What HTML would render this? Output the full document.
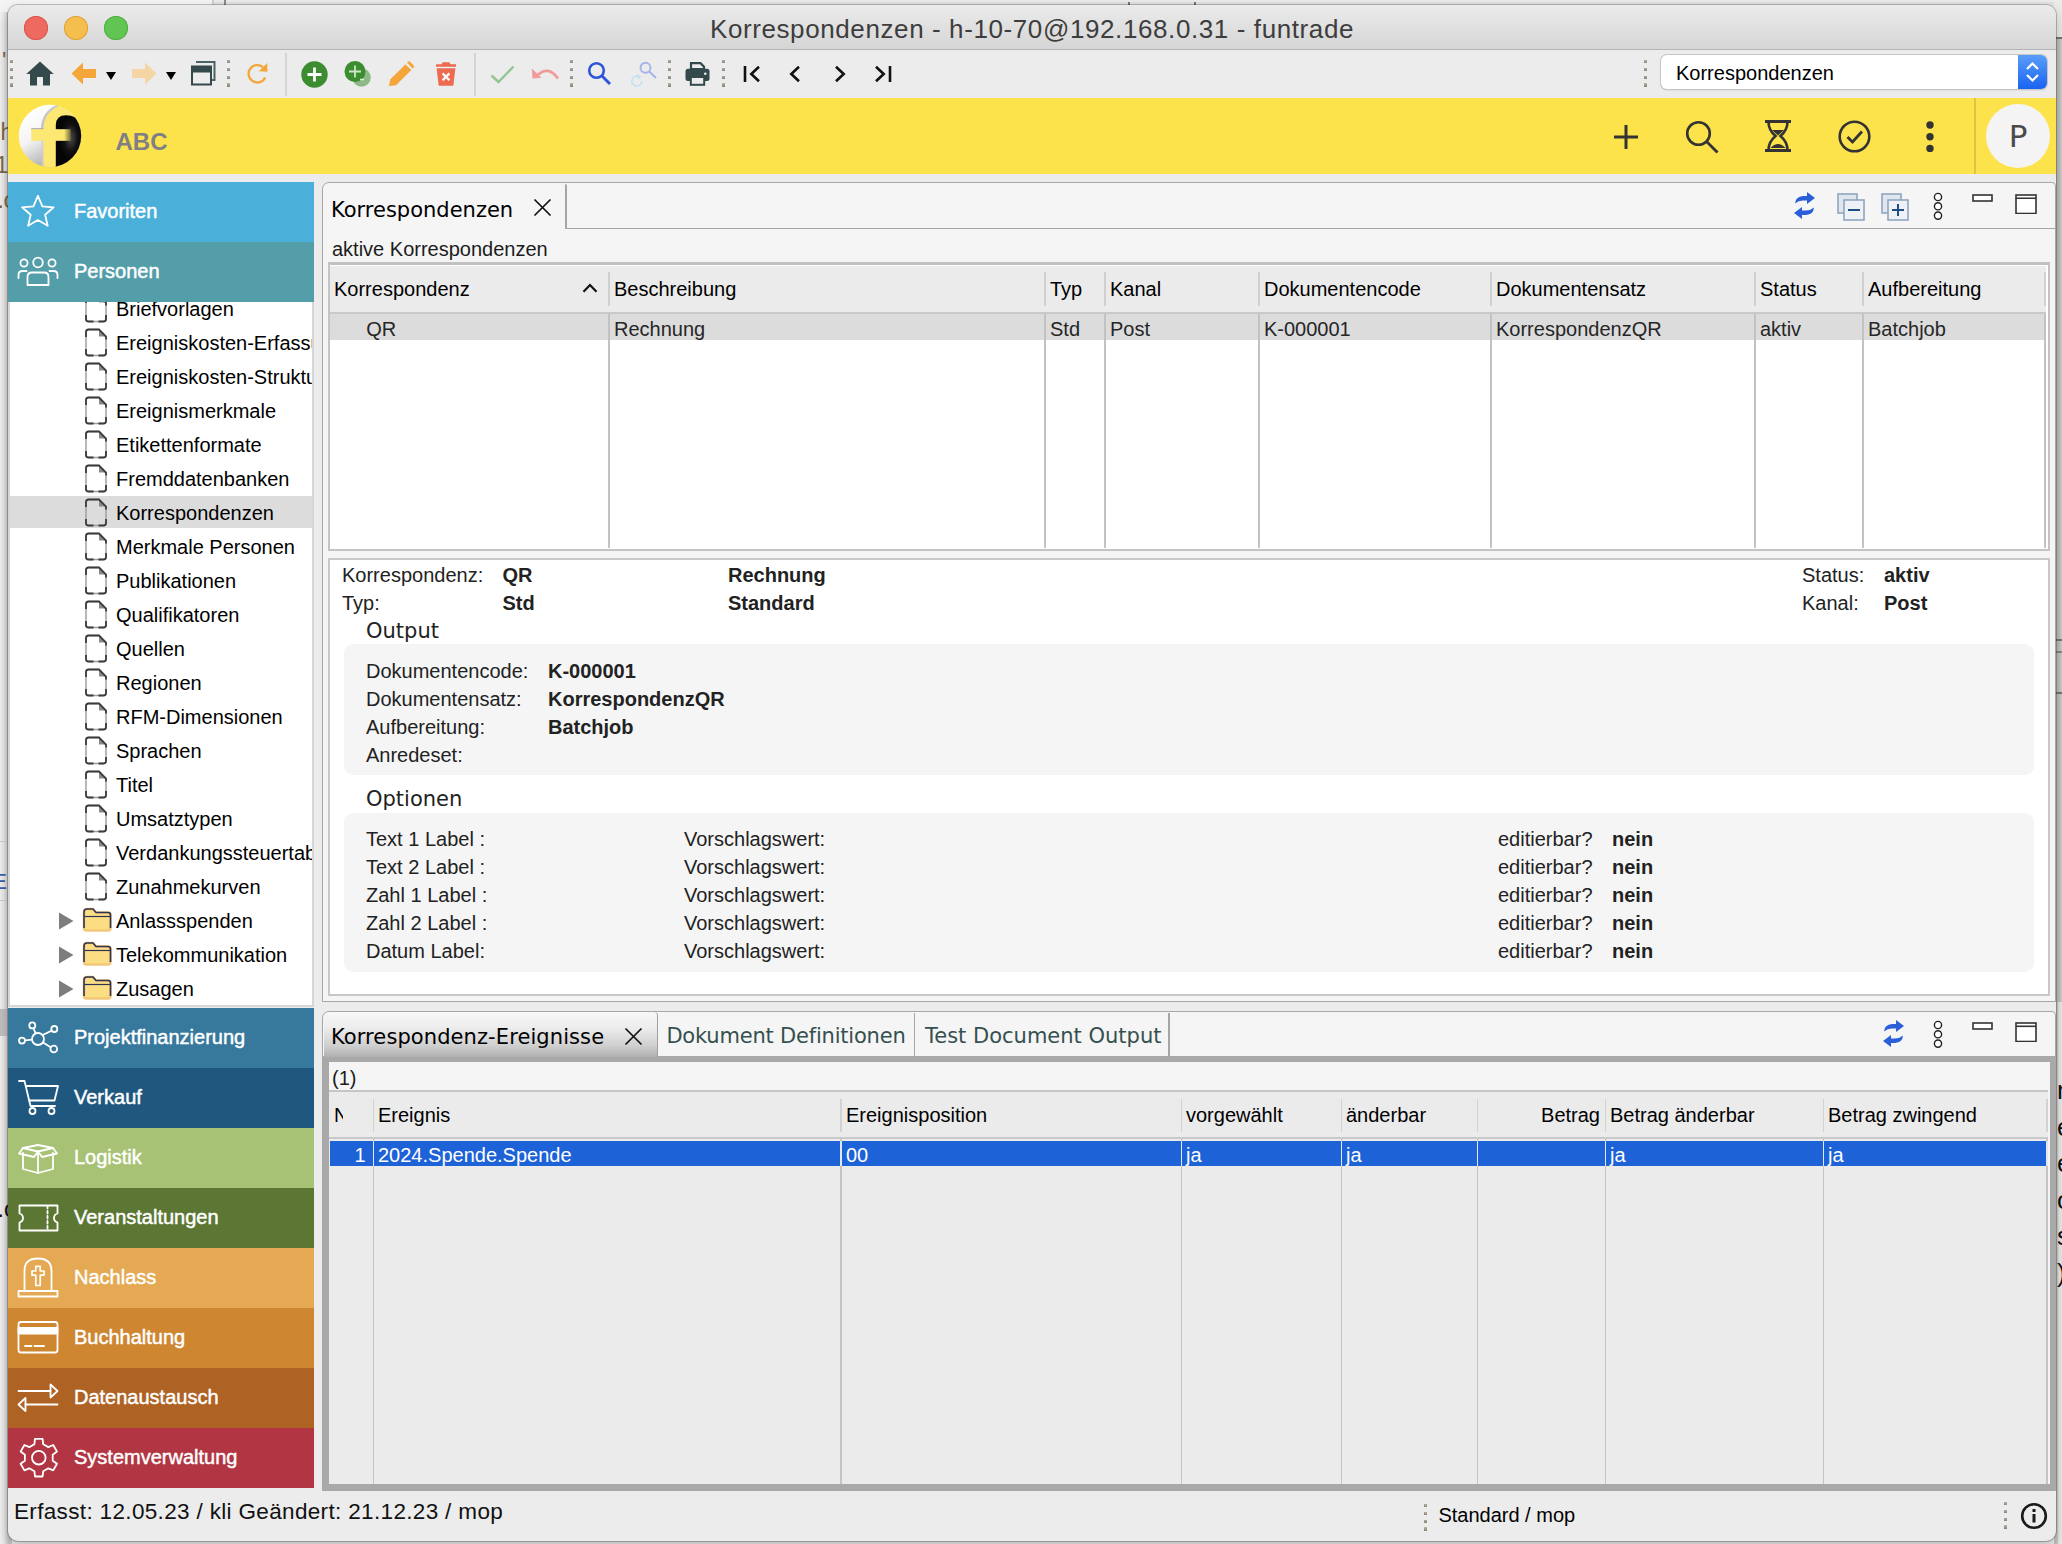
<!DOCTYPE html>
<html lang="de">
<head>
<meta charset="utf-8">
<title>Korrespondenzen - h-10-70@192.168.0.31 - funtrade</title>
<style>
*{box-sizing:border-box;margin:0;padding:0}
html,body{width:2062px;height:1544px;overflow:hidden}
body{background:#f3f3f2;font-family:"Liberation Sans",sans-serif;font-size:20px;color:#000;position:relative}
.abs{position:absolute}
.t{position:absolute;white-space:pre;line-height:24px;height:24px}
.b{font-weight:700}
.dv{font-family:"DejaVu Sans",sans-serif}
#win{position:absolute;left:8px;top:5px;width:2048px;height:1536px;background:#ececec;border-radius:10px;overflow:hidden;box-shadow:0 0 0 1px rgba(0,0,0,.22),0 6px 14px rgba(0,0,0,.25)}
#titlebar{position:absolute;left:0;top:0;width:2048px;height:45px;background:linear-gradient(#ebebeb,#d5d5d5);border-bottom:1px solid #b4b4b4}
#title{position:absolute;left:0;width:2048px;top:9px;text-align:center;font-size:26px;line-height:30px;color:#3d3d3d;letter-spacing:.6px}
.tl{position:absolute;top:11px;width:24px;height:24px;border-radius:50%}
#banner{position:absolute;left:0;top:93px;width:2048px;height:76px;background:#fde34b}
.cat{position:absolute;left:0;width:306px;height:60px;color:#fff}
.cat span{position:absolute;left:66px;top:17px;line-height:24px;font-size:20px;-webkit-text-stroke:.45px #fff}
.cat svg{position:absolute;left:0;top:0}
#tree{position:absolute;left:0;top:297px;width:306px;height:705px;background:#fff;border:2px solid #d6d6d6;border-top:none;overflow:hidden}
.ti{position:absolute;left:0;width:302px;height:34px}
.ti span{position:absolute;left:106px;top:5px;line-height:24px;white-space:pre}
.ti svg{position:absolute}
.grip{position:absolute;width:3.4px;height:28px;background:repeating-linear-gradient(#b4b0a2 0,#8a8676 3.2px,transparent 3.2px,transparent 7.8px)}
.vsep{position:absolute;width:2px;background:#d4d4d4}
.panel{position:absolute;background:#f5f5f5;border:2px solid #a9a9a9;border-radius:9px 9px 0 0}
.th{position:absolute;top:0;height:42px;line-height:42px;white-space:pre}
.hsep{position:absolute;width:2px;background:#cfcfcf}
.col{position:absolute;width:2px;background:#cdcdcd}
.gb{position:absolute;background:#f5f5f5;border-radius:9px}
</style>
</head>
<body>
<div class="abs" style="left:0;top:0;width:213px;height:40px;background:#f4f4f4"></div>
<div class="abs" style="left:213px;top:0;width:1849px;height:6px;background:#e2e2e2;border-top:2px solid #ececec"></div>
<div class="abs" style="left:212px;top:0;width:1.5px;height:6px;background:#cfcfcf"></div>
<div class="abs" style="left:224px;top:0;width:2px;height:6px;background:#8a8a8a"></div>
<div class="abs" style="left:1128px;top:2px;width:1.5px;height:4px;background:#777"></div>
<div class="abs" style="left:1194px;top:2px;width:1.5px;height:4px;background:#777"></div>
<div class="abs" style="left:0;top:12px;width:12px;height:1532px;background:linear-gradient(90deg,#f3f2f1 0,#ecebea 3.5px,#dcdcdc 6px,#c9c9c9 8px)"></div>
<div class="abs" style="left:0;top:1009px;width:9px;height:27px;background:#c2c2c2"></div>
<div class="abs" style="left:0;top:841px;width:9px;height:1px;background:#cfcfcf"></div>
<div class="abs" style="left:0;top:900px;width:9px;height:1px;background:#cfcfcf"></div>
<div class="t" style="left:0.5px;top:119px;font-size:23px;line-height:26px;height:26px;color:#7a6a48">h</div>
<div class="t" style="left:-4.5px;top:151.5px;font-size:23px;line-height:26px;height:26px;color:#7a6a48">1</div>
<div class="t" style="left:-2.5px;top:187px;font-size:23px;line-height:26px;height:26px;color:#7a6a48">.</div>
<div class="t" style="left:3.5px;top:187px;font-size:23px;line-height:26px;height:26px;color:#7a6a48">c</div>
<div class="t" style="left:2px;top:48px;font-size:23px;line-height:26px;height:26px;color:#7a6a48">'</div>
<div class="t" style="left:-2.5px;top:1196px;font-size:23px;line-height:26px;height:26px;color:#111">.</div>
<div class="t" style="left:4px;top:1196px;font-size:23px;line-height:26px;height:26px;color:#111">c</div>
<div class="t" style="left:-20px;top:870px;width:27px;text-align:right;font-size:22px;line-height:24px;color:#3b5ea8">E</div>
<div class="abs" style="left:2054px;top:0;width:8px;height:38px;background:#ececec"></div>
<div class="abs" style="left:2054px;top:37px;width:8px;height:965px;background:linear-gradient(90deg,#bdbdbd 0,#bdbdbd 4px,#d2d2d2 8px)"></div>
<div class="abs" style="left:2054px;top:37px;width:8px;height:1.5px;background:#777"></div>
<div class="abs" style="left:2054px;top:639px;width:8px;height:1.5px;background:#777"></div>
<div class="abs" style="left:2054px;top:651px;width:8px;height:1.5px;background:#888"></div>
<div class="abs" style="left:2054px;top:692px;width:8px;height:1.5px;background:#777"></div>
<div class="abs" style="left:2054px;top:1002px;width:8px;height:542px;background:linear-gradient(90deg,#c4c4c4 0,#c4c4c4 3px,#ececec 5px)"></div>
<div class="t" style="left:2057px;top:1072px;font-size:26px;line-height:36.5px;height:230px;color:#111;white-space:pre-line;width:20px">n
e
e
o
s
)</div>
<div id="win">
<div id="titlebar">
<div class="tl" style="left:16px;background:#ee6a5e;box-shadow:inset 0 0 0 1px #d9574c"></div>
<div class="tl" style="left:56px;background:#f6be4f;box-shadow:inset 0 0 0 1px #dea33a"></div>
<div class="tl" style="left:96px;background:#61c554;box-shadow:inset 0 0 0 1px #4fae42"></div>
<div id="title">Korrespondenzen - h-10-70@192.168.0.31 - funtrade</div>
</div>
<div class="grip" style="left:2px;top:55px"></div>
<svg class="abs" style="left:18px;top:56px" width="28" height="25" viewBox="0 0 28 25"><path d="M14 0.5 L0.3 13 H4 V24.5 H11 V16 H17 V24.5 H24 V13 H27.7 Z" fill="#34494b"/></svg>
<svg class="abs" style="left:63px;top:57px" width="26" height="24" viewBox="0 0 26 24"><path d="M12 0.5 L0.5 11.5 L12 22.5 V16 H25 V7 H12 Z" fill="#f4a63b"/></svg>
<svg class="abs" style="left:98px;top:67px" width="10" height="8" viewBox="0 0 10 8"><path d="M0 0 H10 L5 8 Z" fill="#000"/></svg>
<svg class="abs" style="left:123px;top:57px" width="26" height="24" viewBox="0 0 26 24"><path d="M14 0.5 L25.5 11.5 L14 22.5 V16 H1 V7 H14 Z" fill="#f5d5a6"/></svg>
<svg class="abs" style="left:158px;top:67px" width="10" height="8" viewBox="0 0 10 8"><path d="M0 0 H10 L5 8 Z" fill="#000"/></svg>
<svg class="abs" style="left:183px;top:56px" width="25" height="25" viewBox="0 0 25 25"><path d="M5 1 H23.5 V19 H20" fill="none" stroke="#4d6366" stroke-width="2"/><rect x="1" y="5.5" width="19" height="18" fill="#ececec" stroke="#34494b" stroke-width="2"/><rect x="1" y="5.5" width="19" height="6" fill="#34494b"/></svg>
<div class="grip" style="left:219px;top:55px"></div>
<svg class="abs" style="left:238px;top:57px" width="24" height="24" viewBox="0 0 24 24"><path d="M19.2 15.5 A8.7 8.7 0 1 1 17 5.2" fill="none" stroke="#f4a63b" stroke-width="2.3"/><path d="M12.8 9.3 L21.5 9.8 L21.2 1 Z" fill="#f4a63b"/></svg>
<div class="vsep" style="left:277px;top:48px;height:43px"></div>
<svg class="abs" style="left:292.6px;top:55.5px" width="27" height="27" viewBox="0 0 27 27"><circle cx="13.5" cy="13.5" r="13.2" fill="#3c8c30"/><path d="M13.5 6.5 V20.5 M6.5 13.5 H20.5" stroke="#fff" stroke-width="2.8"/></svg>
<svg class="abs" style="left:335px;top:55px" width="30" height="28" viewBox="0 0 30 28"><circle cx="18.5" cy="17.5" r="9.3" fill="#8fb888"/><circle cx="12" cy="11.5" r="10.5" fill="#3c8c30"/><path d="M12 5.5 V17.5 M6 11.5 H18" stroke="#cfe6c9" stroke-width="1.8"/><path d="M17 19.5 h4" stroke="#dfeedc" stroke-width="1.3"/></svg>
<svg class="abs" style="left:380px;top:56px" width="27" height="26" viewBox="0 0 27 26"><path d="M1 25 L2.2 18.5 L17.5 3.2 L23.3 9 L8 24.2 Z" fill="#f4a63b"/><path d="M19 1.8 L20.3 0.5 Q21 0 21.8 0.6 L26 4.8 Q26.5 5.6 25.9 6.3 L24.7 7.6 Z" fill="#f4a63b"/></svg>
<svg class="abs" style="left:427px;top:56px" width="22" height="26" viewBox="0 0 22 26"><path d="M1 3.3 H6.5 L7.8 1.3 H14.2 L15.5 3.3 H21 V5.8 H1 Z" fill="#ee6a50"/><path d="M1.6 7.3 H20.4 L18.3 24.8 H3.7 Z" fill="#ee6a50"/><path d="M7.6 12.4 L14.4 19.2 M14.4 12.4 L7.6 19.2" stroke="#fff" stroke-width="2.3"/></svg>
<div class="vsep" style="left:466px;top:48px;height:43px"></div>
<svg class="abs" style="left:482px;top:60px" width="25" height="19" viewBox="0 0 25 19"><path d="M1.5 10.5 L8.5 17 L23.5 1.5" fill="none" stroke="#93c493" stroke-width="2.4"/></svg>
<svg class="abs" style="left:523px;top:62px" width="29" height="14" viewBox="0 0 29 14"><path d="M6.5 8.2 Q17 -2 27 11.5" fill="none" stroke="#f09a9a" stroke-width="2.8"/><path d="M0.8 1.5 L10.5 10.8 L1.5 11.5 Z" fill="#f09a9a"/></svg>
<div class="grip" style="left:562px;top:55px"></div>
<svg class="abs" style="left:579px;top:56px" width="25" height="25" viewBox="0 0 25 25"><circle cx="9.5" cy="9.5" r="7.3" fill="none" stroke="#2c55d8" stroke-width="2.6"/><path d="M14.8 14.8 L23 23" stroke="#2c55d8" stroke-width="3"/></svg>
<svg class="abs" style="left:622px;top:56px" width="28" height="27" viewBox="0 0 28 27"><circle cx="15.5" cy="6.8" r="5" fill="none" stroke="#a5b4ea" stroke-width="1.9"/><path d="M19.2 10.6 L26 17" stroke="#a5b4ea" stroke-width="2.1"/><path d="M11.8 20 A5 5 0 1 1 8 15.3" fill="none" stroke="#c3e0f0" stroke-width="1.5"/><path d="M7 13 L11.5 15.8 L8 18.5 Z" fill="#c3e0f0"/></svg>
<div class="grip" style="left:660px;top:55px"></div>
<svg class="abs" style="left:677px;top:57px" width="25" height="24" viewBox="0 0 25 24"><path d="M6 7 V1.2 H15.5 L19 4.7 V7 Z" fill="#ececec" stroke="#34494b" stroke-width="2.2"/><rect x="0.5" y="6.8" width="24" height="12.2" rx="2.5" fill="#34494b"/><rect x="5.8" y="15" width="13.4" height="7.8" fill="#ececec" stroke="#34494b" stroke-width="2"/><circle cx="20.3" cy="11.7" r="1.3" fill="#ececec"/></svg>
<div class="grip" style="left:714px;top:55px"></div>
<svg class="abs" style="left:735px;top:60px" width="18" height="18" viewBox="0 0 18 18"><path d="M2 1 V17" stroke="#111" stroke-width="2.6"/><path d="M16 1.8 L8.3 9 L16 16.2" fill="none" stroke="#111" stroke-width="2.6"/></svg>
<svg class="abs" style="left:781px;top:60px" width="12" height="18" viewBox="0 0 12 18"><path d="M10 1.8 L2.3 9 L10 16.2" fill="none" stroke="#111" stroke-width="2.6"/></svg>
<svg class="abs" style="left:826px;top:60px" width="12" height="18" viewBox="0 0 12 18"><path d="M2 1.8 L9.7 9 L2 16.2" fill="none" stroke="#111" stroke-width="2.6"/></svg>
<svg class="abs" style="left:866px;top:60px" width="18" height="18" viewBox="0 0 18 18"><path d="M16 1 V17" stroke="#111" stroke-width="2.6"/><path d="M2 1.8 L9.7 9 L2 16.2" fill="none" stroke="#111" stroke-width="2.6"/></svg>
<div class="grip" style="left:1636px;top:55px"></div>
<div class="abs" style="left:1653px;top:50px;width:386px;height:34px;background:#fff;border-radius:6px;box-shadow:0 0 0 1px #c6c6c6,0 1px 1.5px rgba(0,0,0,.25);overflow:hidden">
<div class="t" style="left:15px;top:6px">Korrespondenzen</div>
<div class="abs" style="right:0;top:0;width:29px;height:34px;background:linear-gradient(#5a9df8,#1a63f2)"><svg class="abs" style="left:7px;top:6px" width="15" height="22" viewBox="0 0 15 22"><path d="M2 8 L7.5 2.5 L13 8 M2 14 L7.5 19.5 L13 14" fill="none" stroke="#fff" stroke-width="2.2"/></svg></div>
</div>
<div id="banner">
<svg class="abs" style="left:11px;top:5px" width="64" height="66" viewBox="0 0 64 66"><defs><linearGradient id="lg1" x1="0.1" y1="0.15" x2="0.55" y2="0.95"><stop offset="0" stop-color="#fff"/><stop offset="0.45" stop-color="#f4f4f4"/><stop offset="1" stop-color="#a8a8a8"/></linearGradient><radialGradient id="lg2" cx="0.55" cy="0.42" r="0.42"><stop offset="0" stop-color="#4a4a4a"/><stop offset="0.6" stop-color="#111"/><stop offset="1" stop-color="#050505"/></radialGradient><linearGradient id="lg3" x1="0" y1="0" x2="1" y2="0"><stop offset="0" stop-color="#fde873"/><stop offset="0.55" stop-color="#fde873"/><stop offset="1" stop-color="#6d6638"/></linearGradient><clipPath id="lc"><circle cx="31" cy="33" r="31.2"/></clipPath></defs><circle cx="31" cy="33" r="31.2" fill="url(#lg1)"/><g clip-path="url(#lc)"><path d="M24.3 66 V27 Q24.5 9 41 2.5 L64 -2 V66 Z" fill="#fde873"/><path d="M24.3 27 Q24.5 9 41 2.5 L39 1.6 Q22 8 21.8 27 Z" fill="#9a9a9a" opacity=".55"/><path d="M36.8 66 V22 Q37 12.2 47 12.2 Q58 12.2 64 22 V66 Z" fill="url(#lg2)"/><rect x="12.3" y="25.2" width="12" height="1.6" fill="#a5a5a5"/><rect x="12.3" y="26.2" width="25" height="11.6" fill="#fde873"/><rect x="36.8" y="26.2" width="15" height="11.6" fill="url(#lg3)"/><rect x="22.3" y="37.8" width="2" height="28" fill="#cfcfcf" opacity=".7"/></g></svg>
<div class="t b" style="left:107.5px;top:28.5px;font-size:24px;line-height:30px;height:30px;color:#817f86">ABC</div>
<svg class="abs" style="left:1604px;top:25px" width="28" height="28" viewBox="0 0 28 28"><path d="M14 2 V26 M2 14 H26" stroke="#333" stroke-width="3"/></svg>
<svg class="abs" style="left:1676px;top:21px" width="36" height="36" viewBox="0 0 36 36"><circle cx="14.5" cy="14.5" r="11.3" fill="none" stroke="#333" stroke-width="2.6"/><path d="M22.8 22.8 L33.5 33.5" stroke="#333" stroke-width="2.8"/></svg>
<svg class="abs" style="left:1756px;top:21px" width="28" height="34" viewBox="0 0 28 34"><path d="M1 2.5 H27 M1 31.5 H27" stroke="#333" stroke-width="3"/><path d="M4.5 3 Q4.5 11 11.5 17 Q4.5 23 4.5 31 M23.5 3 Q23.5 11 16.5 17 Q23.5 23 23.5 31" fill="none" stroke="#333" stroke-width="2.6"/><path d="M8 11 H20 L14 16.5 Z M6.5 29 Q14 21 21.5 29 Z" fill="#333"/></svg>
<svg class="abs" style="left:1829px;top:21px" width="36" height="36" viewBox="0 0 36 36"><circle cx="17.5" cy="17.5" r="14.8" fill="none" stroke="#333" stroke-width="2.6"/><path d="M10.5 18 L15.5 23 L25 12.5" fill="none" stroke="#333" stroke-width="2.8"/></svg>
<svg class="abs" style="left:1917px;top:22px" width="10" height="34" viewBox="0 0 10 34"><circle cx="5" cy="5" r="3.7" fill="#333"/><circle cx="5" cy="16.7" r="3.7" fill="#333"/><circle cx="5" cy="28.4" r="3.7" fill="#333"/></svg>
<div class="abs" style="left:1966px;top:0;width:2px;height:76px;background:#dcc53f"></div>
<div class="abs" style="left:1978px;top:6px;width:64px;height:64px;border-radius:50%;background:#f4f4f5"></div>
<div class="t dv" style="left:1978px;top:18px;width:64px;text-align:center;font-size:31px;line-height:40px;height:40px;color:#4a4a4a">P</div>
</div>
<!--SB0-->
<div class="cat" style="top:177px;background:#4ab0d9"><svg width="66" height="60" viewBox="0 0 66 60"><path d="M29.9,13.8 L34.4,24.3 L45.7,25.3 L37.1,32.7 L39.7,43.8 L29.9,38.0 L20.1,43.8 L22.7,32.7 L14.1,25.3 L25.4,24.3 Z" stroke="#fff" fill="none" stroke-width="1.8" stroke-linejoin="round" stroke-linecap="round"/></svg><span>Favoriten</span></div>
<div class="cat" style="top:237px;background:#549eaa"><svg width="66" height="60" viewBox="0 0 66 60"><g stroke="#fff" fill="none" stroke-width="1.8" stroke-linejoin="round" stroke-linecap="round"><circle cx="30" cy="20.5" r="4.8"/><circle cx="16" cy="21" r="3.6"/><circle cx="44" cy="21" r="3.6"/><path d="M19.5 43 V35 Q19.5 30.5 24 30.5 H36 Q40.5 30.5 40.5 35 V43 Z"/><path d="M10.5 36 V33 Q10.5 29 14.5 29 H18.5 M49.5 36 V33 Q49.5 29 45.5 29 H41.5"/></g></svg><span>Personen</span></div>
<div class="cat" style="top:1003px;background:#37789d"><svg width="66" height="60" viewBox="0 0 66 60"><g stroke="#fff" fill="none" stroke-width="1.8" stroke-linejoin="round" stroke-linecap="round"><circle cx="30" cy="31" r="6"/><circle cx="24.3" cy="17.4" r="3"/><circle cx="46.3" cy="21" r="3"/><circle cx="14" cy="32.6" r="3"/><circle cx="45.8" cy="41" r="3.4"/><path d="M27.6 25.4 L25.5 20.3 M34.6 27 L43.8 22.6 M24 31.7 L17 32.3 M35 34.5 L42.7 39.3"/></g></svg><span>Projektfinanzierung</span></div>
<div class="cat" style="top:1063px;background:#20577f"><svg width="66" height="60" viewBox="0 0 66 60"><g stroke="#fff" fill="none" stroke-width="1.8" stroke-linejoin="round" stroke-linecap="round"><path d="M11 13 H16.5 L22.5 38 H47"/><path d="M18 18 H50 L46.5 32.5 H21.3"/><circle cx="24.5" cy="43" r="3"/><circle cx="43.5" cy="43" r="3"/></g></svg><span>Verkauf</span></div>
<div class="cat" style="top:1123px;background:#a8c275"><svg width="66" height="60" viewBox="0 0 66 60"><g stroke="#fff" fill="none" stroke-width="1.8" stroke-linejoin="round" stroke-linecap="round"><path d="M15 25 V41 L30 45 L45 41 V25"/><path d="M15 20 L30 17 L45 20 L30 23.5 Z"/><path d="M15 20 L11 25.5 L26 29 L30 23.5 L34 29 L49 25.5 L45 20"/><path d="M30 23.5 V45"/></g></svg><span>Logistik</span></div>
<div class="cat" style="top:1183px;background:#5c7733"><svg width="66" height="60" viewBox="0 0 66 60"><g stroke="#fff" fill="none" stroke-width="1.8" stroke-linejoin="round" stroke-linecap="round"><path d="M11.5 17.5 H49.5 V25.5 Q46 26.5 46 30 Q46 33.5 49.5 34.5 V42.5 H11.5 V34.5 Q15 33.5 15 30 Q15 26.5 11.5 25.5 Z"/><path d="M39.5 18 V42" stroke-dasharray="2.5 2.5"/></g></svg><span>Veranstaltungen</span></div>
<div class="cat" style="top:1243px;background:#e4a952"><svg width="66" height="60" viewBox="0 0 66 60"><g stroke="#fff" fill="none" stroke-width="1.8" stroke-linejoin="round" stroke-linecap="round"><path d="M16.5 43 V23 Q16.5 10.5 30 10.5 Q43.5 10.5 43.5 23 V43"/><path d="M10.5 43 H49.5 V48.5 H10.5 Z"/><path d="M27.8 18.3 H32.2 V23 H36 V27.2 H32.2 V37.5 H27.8 V27.2 H24 V23 H27.8 Z" stroke-width="1.7"/></g></svg><span>Nachlass</span></div>
<div class="cat" style="top:1303px;background:#ce8631"><svg width="66" height="60" viewBox="0 0 66 60"><g stroke="#fff" fill="none" stroke-width="1.8" stroke-linejoin="round" stroke-linecap="round"><rect x="10.5" y="14" width="39" height="30.5" rx="2.5"/><path d="M10.5 20 H49.5 V25.5 H10.5 Z" fill="#fff"/><path d="M17 38 H23.5 M26.5 38 H36"/></g></svg><span>Buchhaltung</span></div>
<div class="cat" style="top:1363px;background:#ae6223"><svg width="66" height="60" viewBox="0 0 66 60"><g stroke="#fff" fill="none" stroke-width="1.8" stroke-linejoin="round" stroke-linecap="round"><path d="M10.5 23 H42.5 M17.5 36.5 H49.5"/><path d="M42.5 16.5 L49.5 23 L42.5 29.5 Z"/><path d="M17.5 30 L10.5 36.5 L17.5 43 Z"/></g></svg><span>Datenaustausch</span></div>
<div class="cat" style="top:1423px;background:#b23543"><svg width="66" height="60" viewBox="0 0 66 60"><g stroke="#fff" fill="none" stroke-width="1.8" stroke-linejoin="round" stroke-linecap="round"><path d="M26.4,16.2 L27.0,10.9 L34.6,10.9 L35.2,16.2 L40.3,19.1 L45.2,17.0 L49.0,23.6 L44.7,26.7 L44.7,32.7 L49.0,35.8 L45.2,42.4 L40.3,40.3 L35.2,43.2 L34.6,48.5 L27.0,48.5 L26.4,43.2 L21.3,40.3 L16.4,42.4 L12.6,35.8 L16.9,32.7 L16.9,26.7 L12.6,23.6 L16.4,17.0 L21.3,19.1 Z" stroke-linejoin="round"/><circle cx="30.8" cy="29.7" r="6.8"/></g></svg><span>Systemverwaltung</span></div>
<div id="tree">
<div class="ti" style="top:-10px"><svg style="left:74px;top:1.5px" width="24" height="29" viewBox="0 0 24 29"><path d="M4.5 1.5 H15 L22 8.5 V25 Q22 27.5 19.5 27.5 H4.5 Q2 27.5 2 25 V4 Q2 1.5 4.5 1.5 Z" fill="none" stroke="#9b9b9b" stroke-width="1.4"/><path d="M15 1.5 V8.5 H22 Z" fill="#8a8a8a"/><path d="M2 9 V4 Q2 1.5 4.5 1.5 H15 L22 8.5 V11.5 M2 21 V25 Q2 27.5 4.5 27.5 H9.5 M14.5 27.5 H19.5 Q22 27.5 22 25 V21" fill="none" stroke="#3c3c3c" stroke-width="1.8"/></svg><span>Briefvorlagen</span></div>
<div class="ti" style="top:24px"><svg style="left:74px;top:1.5px" width="24" height="29" viewBox="0 0 24 29"><path d="M4.5 1.5 H15 L22 8.5 V25 Q22 27.5 19.5 27.5 H4.5 Q2 27.5 2 25 V4 Q2 1.5 4.5 1.5 Z" fill="none" stroke="#9b9b9b" stroke-width="1.4"/><path d="M15 1.5 V8.5 H22 Z" fill="#8a8a8a"/><path d="M2 9 V4 Q2 1.5 4.5 1.5 H15 L22 8.5 V11.5 M2 21 V25 Q2 27.5 4.5 27.5 H9.5 M14.5 27.5 H19.5 Q22 27.5 22 25 V21" fill="none" stroke="#3c3c3c" stroke-width="1.8"/></svg><span>Ereigniskosten-Erfassung</span></div>
<div class="ti" style="top:58px"><svg style="left:74px;top:1.5px" width="24" height="29" viewBox="0 0 24 29"><path d="M4.5 1.5 H15 L22 8.5 V25 Q22 27.5 19.5 27.5 H4.5 Q2 27.5 2 25 V4 Q2 1.5 4.5 1.5 Z" fill="none" stroke="#9b9b9b" stroke-width="1.4"/><path d="M15 1.5 V8.5 H22 Z" fill="#8a8a8a"/><path d="M2 9 V4 Q2 1.5 4.5 1.5 H15 L22 8.5 V11.5 M2 21 V25 Q2 27.5 4.5 27.5 H9.5 M14.5 27.5 H19.5 Q22 27.5 22 25 V21" fill="none" stroke="#3c3c3c" stroke-width="1.8"/></svg><span>Ereigniskosten-Struktur</span></div>
<div class="ti" style="top:92px"><svg style="left:74px;top:1.5px" width="24" height="29" viewBox="0 0 24 29"><path d="M4.5 1.5 H15 L22 8.5 V25 Q22 27.5 19.5 27.5 H4.5 Q2 27.5 2 25 V4 Q2 1.5 4.5 1.5 Z" fill="none" stroke="#9b9b9b" stroke-width="1.4"/><path d="M15 1.5 V8.5 H22 Z" fill="#8a8a8a"/><path d="M2 9 V4 Q2 1.5 4.5 1.5 H15 L22 8.5 V11.5 M2 21 V25 Q2 27.5 4.5 27.5 H9.5 M14.5 27.5 H19.5 Q22 27.5 22 25 V21" fill="none" stroke="#3c3c3c" stroke-width="1.8"/></svg><span>Ereignismerkmale</span></div>
<div class="ti" style="top:126px"><svg style="left:74px;top:1.5px" width="24" height="29" viewBox="0 0 24 29"><path d="M4.5 1.5 H15 L22 8.5 V25 Q22 27.5 19.5 27.5 H4.5 Q2 27.5 2 25 V4 Q2 1.5 4.5 1.5 Z" fill="none" stroke="#9b9b9b" stroke-width="1.4"/><path d="M15 1.5 V8.5 H22 Z" fill="#8a8a8a"/><path d="M2 9 V4 Q2 1.5 4.5 1.5 H15 L22 8.5 V11.5 M2 21 V25 Q2 27.5 4.5 27.5 H9.5 M14.5 27.5 H19.5 Q22 27.5 22 25 V21" fill="none" stroke="#3c3c3c" stroke-width="1.8"/></svg><span>Etikettenformate</span></div>
<div class="ti" style="top:160px"><svg style="left:74px;top:1.5px" width="24" height="29" viewBox="0 0 24 29"><path d="M4.5 1.5 H15 L22 8.5 V25 Q22 27.5 19.5 27.5 H4.5 Q2 27.5 2 25 V4 Q2 1.5 4.5 1.5 Z" fill="none" stroke="#9b9b9b" stroke-width="1.4"/><path d="M15 1.5 V8.5 H22 Z" fill="#8a8a8a"/><path d="M2 9 V4 Q2 1.5 4.5 1.5 H15 L22 8.5 V11.5 M2 21 V25 Q2 27.5 4.5 27.5 H9.5 M14.5 27.5 H19.5 Q22 27.5 22 25 V21" fill="none" stroke="#3c3c3c" stroke-width="1.8"/></svg><span>Fremddatenbanken</span></div>
<div class="abs" style="left:0;top:194px;width:302px;height:32px;background:#dcdcdc"></div>
<div class="ti" style="top:194px"><svg style="left:74px;top:1.5px" width="24" height="29" viewBox="0 0 24 29"><path d="M4.5 1.5 H15 L22 8.5 V25 Q22 27.5 19.5 27.5 H4.5 Q2 27.5 2 25 V4 Q2 1.5 4.5 1.5 Z" fill="none" stroke="#9b9b9b" stroke-width="1.4"/><path d="M15 1.5 V8.5 H22 Z" fill="#8a8a8a"/><path d="M2 9 V4 Q2 1.5 4.5 1.5 H15 L22 8.5 V11.5 M2 21 V25 Q2 27.5 4.5 27.5 H9.5 M14.5 27.5 H19.5 Q22 27.5 22 25 V21" fill="none" stroke="#3c3c3c" stroke-width="1.8"/></svg><span>Korrespondenzen</span></div>
<div class="ti" style="top:228px"><svg style="left:74px;top:1.5px" width="24" height="29" viewBox="0 0 24 29"><path d="M4.5 1.5 H15 L22 8.5 V25 Q22 27.5 19.5 27.5 H4.5 Q2 27.5 2 25 V4 Q2 1.5 4.5 1.5 Z" fill="none" stroke="#9b9b9b" stroke-width="1.4"/><path d="M15 1.5 V8.5 H22 Z" fill="#8a8a8a"/><path d="M2 9 V4 Q2 1.5 4.5 1.5 H15 L22 8.5 V11.5 M2 21 V25 Q2 27.5 4.5 27.5 H9.5 M14.5 27.5 H19.5 Q22 27.5 22 25 V21" fill="none" stroke="#3c3c3c" stroke-width="1.8"/></svg><span>Merkmale Personen</span></div>
<div class="ti" style="top:262px"><svg style="left:74px;top:1.5px" width="24" height="29" viewBox="0 0 24 29"><path d="M4.5 1.5 H15 L22 8.5 V25 Q22 27.5 19.5 27.5 H4.5 Q2 27.5 2 25 V4 Q2 1.5 4.5 1.5 Z" fill="none" stroke="#9b9b9b" stroke-width="1.4"/><path d="M15 1.5 V8.5 H22 Z" fill="#8a8a8a"/><path d="M2 9 V4 Q2 1.5 4.5 1.5 H15 L22 8.5 V11.5 M2 21 V25 Q2 27.5 4.5 27.5 H9.5 M14.5 27.5 H19.5 Q22 27.5 22 25 V21" fill="none" stroke="#3c3c3c" stroke-width="1.8"/></svg><span>Publikationen</span></div>
<div class="ti" style="top:296px"><svg style="left:74px;top:1.5px" width="24" height="29" viewBox="0 0 24 29"><path d="M4.5 1.5 H15 L22 8.5 V25 Q22 27.5 19.5 27.5 H4.5 Q2 27.5 2 25 V4 Q2 1.5 4.5 1.5 Z" fill="none" stroke="#9b9b9b" stroke-width="1.4"/><path d="M15 1.5 V8.5 H22 Z" fill="#8a8a8a"/><path d="M2 9 V4 Q2 1.5 4.5 1.5 H15 L22 8.5 V11.5 M2 21 V25 Q2 27.5 4.5 27.5 H9.5 M14.5 27.5 H19.5 Q22 27.5 22 25 V21" fill="none" stroke="#3c3c3c" stroke-width="1.8"/></svg><span>Qualifikatoren</span></div>
<div class="ti" style="top:330px"><svg style="left:74px;top:1.5px" width="24" height="29" viewBox="0 0 24 29"><path d="M4.5 1.5 H15 L22 8.5 V25 Q22 27.5 19.5 27.5 H4.5 Q2 27.5 2 25 V4 Q2 1.5 4.5 1.5 Z" fill="none" stroke="#9b9b9b" stroke-width="1.4"/><path d="M15 1.5 V8.5 H22 Z" fill="#8a8a8a"/><path d="M2 9 V4 Q2 1.5 4.5 1.5 H15 L22 8.5 V11.5 M2 21 V25 Q2 27.5 4.5 27.5 H9.5 M14.5 27.5 H19.5 Q22 27.5 22 25 V21" fill="none" stroke="#3c3c3c" stroke-width="1.8"/></svg><span>Quellen</span></div>
<div class="ti" style="top:364px"><svg style="left:74px;top:1.5px" width="24" height="29" viewBox="0 0 24 29"><path d="M4.5 1.5 H15 L22 8.5 V25 Q22 27.5 19.5 27.5 H4.5 Q2 27.5 2 25 V4 Q2 1.5 4.5 1.5 Z" fill="none" stroke="#9b9b9b" stroke-width="1.4"/><path d="M15 1.5 V8.5 H22 Z" fill="#8a8a8a"/><path d="M2 9 V4 Q2 1.5 4.5 1.5 H15 L22 8.5 V11.5 M2 21 V25 Q2 27.5 4.5 27.5 H9.5 M14.5 27.5 H19.5 Q22 27.5 22 25 V21" fill="none" stroke="#3c3c3c" stroke-width="1.8"/></svg><span>Regionen</span></div>
<div class="ti" style="top:398px"><svg style="left:74px;top:1.5px" width="24" height="29" viewBox="0 0 24 29"><path d="M4.5 1.5 H15 L22 8.5 V25 Q22 27.5 19.5 27.5 H4.5 Q2 27.5 2 25 V4 Q2 1.5 4.5 1.5 Z" fill="none" stroke="#9b9b9b" stroke-width="1.4"/><path d="M15 1.5 V8.5 H22 Z" fill="#8a8a8a"/><path d="M2 9 V4 Q2 1.5 4.5 1.5 H15 L22 8.5 V11.5 M2 21 V25 Q2 27.5 4.5 27.5 H9.5 M14.5 27.5 H19.5 Q22 27.5 22 25 V21" fill="none" stroke="#3c3c3c" stroke-width="1.8"/></svg><span>RFM-Dimensionen</span></div>
<div class="ti" style="top:432px"><svg style="left:74px;top:1.5px" width="24" height="29" viewBox="0 0 24 29"><path d="M4.5 1.5 H15 L22 8.5 V25 Q22 27.5 19.5 27.5 H4.5 Q2 27.5 2 25 V4 Q2 1.5 4.5 1.5 Z" fill="none" stroke="#9b9b9b" stroke-width="1.4"/><path d="M15 1.5 V8.5 H22 Z" fill="#8a8a8a"/><path d="M2 9 V4 Q2 1.5 4.5 1.5 H15 L22 8.5 V11.5 M2 21 V25 Q2 27.5 4.5 27.5 H9.5 M14.5 27.5 H19.5 Q22 27.5 22 25 V21" fill="none" stroke="#3c3c3c" stroke-width="1.8"/></svg><span>Sprachen</span></div>
<div class="ti" style="top:466px"><svg style="left:74px;top:1.5px" width="24" height="29" viewBox="0 0 24 29"><path d="M4.5 1.5 H15 L22 8.5 V25 Q22 27.5 19.5 27.5 H4.5 Q2 27.5 2 25 V4 Q2 1.5 4.5 1.5 Z" fill="none" stroke="#9b9b9b" stroke-width="1.4"/><path d="M15 1.5 V8.5 H22 Z" fill="#8a8a8a"/><path d="M2 9 V4 Q2 1.5 4.5 1.5 H15 L22 8.5 V11.5 M2 21 V25 Q2 27.5 4.5 27.5 H9.5 M14.5 27.5 H19.5 Q22 27.5 22 25 V21" fill="none" stroke="#3c3c3c" stroke-width="1.8"/></svg><span>Titel</span></div>
<div class="ti" style="top:500px"><svg style="left:74px;top:1.5px" width="24" height="29" viewBox="0 0 24 29"><path d="M4.5 1.5 H15 L22 8.5 V25 Q22 27.5 19.5 27.5 H4.5 Q2 27.5 2 25 V4 Q2 1.5 4.5 1.5 Z" fill="none" stroke="#9b9b9b" stroke-width="1.4"/><path d="M15 1.5 V8.5 H22 Z" fill="#8a8a8a"/><path d="M2 9 V4 Q2 1.5 4.5 1.5 H15 L22 8.5 V11.5 M2 21 V25 Q2 27.5 4.5 27.5 H9.5 M14.5 27.5 H19.5 Q22 27.5 22 25 V21" fill="none" stroke="#3c3c3c" stroke-width="1.8"/></svg><span>Umsatztypen</span></div>
<div class="ti" style="top:534px"><svg style="left:74px;top:1.5px" width="24" height="29" viewBox="0 0 24 29"><path d="M4.5 1.5 H15 L22 8.5 V25 Q22 27.5 19.5 27.5 H4.5 Q2 27.5 2 25 V4 Q2 1.5 4.5 1.5 Z" fill="none" stroke="#9b9b9b" stroke-width="1.4"/><path d="M15 1.5 V8.5 H22 Z" fill="#8a8a8a"/><path d="M2 9 V4 Q2 1.5 4.5 1.5 H15 L22 8.5 V11.5 M2 21 V25 Q2 27.5 4.5 27.5 H9.5 M14.5 27.5 H19.5 Q22 27.5 22 25 V21" fill="none" stroke="#3c3c3c" stroke-width="1.8"/></svg><span>Verdankungssteuertabelle</span></div>
<div class="ti" style="top:568px"><svg style="left:74px;top:1.5px" width="24" height="29" viewBox="0 0 24 29"><path d="M4.5 1.5 H15 L22 8.5 V25 Q22 27.5 19.5 27.5 H4.5 Q2 27.5 2 25 V4 Q2 1.5 4.5 1.5 Z" fill="none" stroke="#9b9b9b" stroke-width="1.4"/><path d="M15 1.5 V8.5 H22 Z" fill="#8a8a8a"/><path d="M2 9 V4 Q2 1.5 4.5 1.5 H15 L22 8.5 V11.5 M2 21 V25 Q2 27.5 4.5 27.5 H9.5 M14.5 27.5 H19.5 Q22 27.5 22 25 V21" fill="none" stroke="#3c3c3c" stroke-width="1.8"/></svg><span>Zunahmekurven</span></div>
<div class="ti" style="top:602px"><svg style="left:48px;top:8px" width="16" height="18" viewBox="0 0 16 18"><path d="M1 0.5 L15.5 9 L1 17.5 Z" fill="#7d7d7d"/></svg><svg style="left:72px;top:3px" width="30" height="26" viewBox="0 0 30 26"><path d="M2 5 Q2 2 5 2 H11 L14 5.5 H26 Q28.5 5.5 28.5 8 V21 Q28.5 23.5 26 23.5 H4.5 Q2 23.5 2 21 Z" fill="#fbdd84" stroke="#f3c77a" stroke-width="2.5"/><path d="M2 21 V5 Q2 2 5 2 H11 L14 5.5 H26 Q28.5 5.5 28.5 8 V21" fill="none" stroke="#2f3354" stroke-width="1.6"/><path d="M2.5 9.5 H28" stroke="#2f3354" stroke-width="1.2"/></svg><span>Anlassspenden</span></div>
<div class="ti" style="top:636px"><svg style="left:48px;top:8px" width="16" height="18" viewBox="0 0 16 18"><path d="M1 0.5 L15.5 9 L1 17.5 Z" fill="#7d7d7d"/></svg><svg style="left:72px;top:3px" width="30" height="26" viewBox="0 0 30 26"><path d="M2 5 Q2 2 5 2 H11 L14 5.5 H26 Q28.5 5.5 28.5 8 V21 Q28.5 23.5 26 23.5 H4.5 Q2 23.5 2 21 Z" fill="#fbdd84" stroke="#f3c77a" stroke-width="2.5"/><path d="M2 21 V5 Q2 2 5 2 H11 L14 5.5 H26 Q28.5 5.5 28.5 8 V21" fill="none" stroke="#2f3354" stroke-width="1.6"/><path d="M2.5 9.5 H28" stroke="#2f3354" stroke-width="1.2"/></svg><span>Telekommunikation</span></div>
<div class="ti" style="top:670px"><svg style="left:48px;top:8px" width="16" height="18" viewBox="0 0 16 18"><path d="M1 0.5 L15.5 9 L1 17.5 Z" fill="#7d7d7d"/></svg><svg style="left:72px;top:3px" width="30" height="26" viewBox="0 0 30 26"><path d="M2 5 Q2 2 5 2 H11 L14 5.5 H26 Q28.5 5.5 28.5 8 V21 Q28.5 23.5 26 23.5 H4.5 Q2 23.5 2 21 Z" fill="#fbdd84" stroke="#f3c77a" stroke-width="2.5"/><path d="M2 21 V5 Q2 2 5 2 H11 L14 5.5 H26 Q28.5 5.5 28.5 8 V21" fill="none" stroke="#2f3354" stroke-width="1.6"/><path d="M2.5 9.5 H28" stroke="#2f3354" stroke-width="1.2"/></svg><span>Zusagen</span></div>
</div>
<!--SB1-->
<div class="abs" style="left:314px;top:177px;width:1734px;height:820px;background:#f5f5f5;border:1.7px solid #a6a6a6;border-radius:7px 4px 0 0"></div>
<div class="abs" style="left:558px;top:222.6px;width:1489px;height:1.7px;background:#a6a6a6"></div>
<div class="abs" style="left:557px;top:179px;width:1.7px;height:45px;background:#a6a6a6;border-radius:0 3px 0 0"></div>
<div class="t dv" style="left:323px;top:191.5px;font-size:21px;line-height:26px;height:26px;">Korrespondenzen</div>
<svg class="abs" style="left:525px;top:193px" width="19" height="19" viewBox="0 0 19 19"><path d="M1.5 1.5 L17.5 17.5 M17.5 1.5 L1.5 17.5" stroke="#111" stroke-width="1.7" fill="none"/></svg>
<svg class="abs" style="left:1784px;top:185px" width="25" height="31" viewBox="0 0 25 31"><g fill="#2b5fd9"><path d="M3 13.5 Q3.5 6.5 11 6 L15 6 V2 L23 8 L15 14 V10.5 L11 10.5 Q6.5 10.5 3 13.5 Z"/><path d="M22 17.5 Q21.5 24.5 14 25 L10 25 V29 L2 23 L10 17 V20.5 L14 20.5 Q18.5 20.5 22 17.5 Z"/></g></svg>
<svg class="abs" style="left:1829px;top:188px" width="28" height="28" viewBox="0 0 28 28"><rect x="1" y="1" width="19" height="19" fill="#dfe6ee" stroke="#8fa6bf" stroke-width="1.6"/><rect x="7" y="7" width="20" height="20" fill="#eef2f7" stroke="#8fa6bf" stroke-width="1.6"/><path d="M11 17 H23" stroke="#1d4e86" stroke-width="2"/></svg>
<svg class="abs" style="left:1873px;top:188px" width="28" height="28" viewBox="0 0 28 28"><rect x="1" y="1" width="19" height="19" fill="#dfe6ee" stroke="#8fa6bf" stroke-width="1.6"/><rect x="7" y="7" width="20" height="20" fill="#eef2f7" stroke="#8fa6bf" stroke-width="1.6"/><path d="M11 17 H23 M17 11 V23" stroke="#1d4e86" stroke-width="2"/></svg>
<svg class="abs" style="left:1925.4px;top:186.5px" width="10" height="29" viewBox="0 0 10 29"><g fill="#fff" stroke="#222" stroke-width="1.4"><circle cx="5" cy="5" r="3.6"/><circle cx="5" cy="14.3" r="3.6"/><circle cx="5" cy="23.6" r="3.6"/></g></svg>
<svg class="abs" style="left:1963.5px;top:188.8px" width="21" height="8" viewBox="0 0 21 8"><rect x="1" y="1" width="19" height="6" fill="#fff" stroke="#333" stroke-width="1.6"/></svg>
<svg class="abs" style="left:2007px;top:188.8px" width="22" height="20.5" viewBox="0 0 22 20.5"><rect x="1" y="1" width="20" height="18.5" fill="#fff" stroke="#333" stroke-width="1.6"/><path d="M1 4.3 H21" stroke="#333" stroke-width="1.6"/></svg>
<div class="t" style="left:324px;top:231.7px;color:#1c1c1c">aktive Korrespondenzen</div>
<div class="abs" style="left:320px;top:257px;width:1722px;height:289px;background:#fff;border:2px solid #c4c4c4;border-top:3.5px solid #c0c0c0"></div>
<div class="abs" style="left:322px;top:260.5px;width:1716px;height:46px;background:#ebebeb"></div>
<div class="abs" style="left:322px;top:306.5px;width:1716px;height:2px;background:#c9c9c9"></div>
<div class="abs" style="left:322px;top:308.5px;width:1716px;height:26px;background:#dcdcdc"></div>
<div class="abs" style="left:600px;top:267px;width:1.6px;height:34px;background:#d0d0d0"></div>
<div class="abs" style="left:600px;top:308.5px;width:1.6px;height:234.5px;background:#c2c2c2"></div>
<div class="abs" style="left:1036px;top:267px;width:1.6px;height:34px;background:#d0d0d0"></div>
<div class="abs" style="left:1036px;top:308.5px;width:1.6px;height:234.5px;background:#c2c2c2"></div>
<div class="abs" style="left:1096px;top:267px;width:1.6px;height:34px;background:#d0d0d0"></div>
<div class="abs" style="left:1096px;top:308.5px;width:1.6px;height:234.5px;background:#c2c2c2"></div>
<div class="abs" style="left:1250px;top:267px;width:1.6px;height:34px;background:#d0d0d0"></div>
<div class="abs" style="left:1250px;top:308.5px;width:1.6px;height:234.5px;background:#c2c2c2"></div>
<div class="abs" style="left:1482px;top:267px;width:1.6px;height:34px;background:#d0d0d0"></div>
<div class="abs" style="left:1482px;top:308.5px;width:1.6px;height:234.5px;background:#c2c2c2"></div>
<div class="abs" style="left:1746px;top:267px;width:1.6px;height:34px;background:#d0d0d0"></div>
<div class="abs" style="left:1746px;top:308.5px;width:1.6px;height:234.5px;background:#c2c2c2"></div>
<div class="abs" style="left:1854px;top:267px;width:1.6px;height:34px;background:#d0d0d0"></div>
<div class="abs" style="left:1854px;top:308.5px;width:1.6px;height:234.5px;background:#c2c2c2"></div>
<div class="abs" style="left:2036px;top:267px;width:1.6px;height:34px;background:#d0d0d0"></div>
<div class="abs" style="left:2036px;top:308.5px;width:1.6px;height:234.5px;background:#c2c2c2"></div>
<div class="t" style="left:326px;top:271.7px;">Korrespondenz</div>
<div class="t" style="left:606px;top:271.7px;">Beschreibung</div>
<div class="t" style="left:1042px;top:271.7px;">Typ</div>
<div class="t" style="left:1102px;top:271.7px;">Kanal</div>
<div class="t" style="left:1256px;top:271.7px;">Dokumentencode</div>
<div class="t" style="left:1488px;top:271.7px;">Dokumentensatz</div>
<div class="t" style="left:1752px;top:271.7px;">Status</div>
<div class="t" style="left:1860px;top:271.7px;">Aufbereitung</div>
<svg class="abs" style="left:573.5px;top:278px" width="16" height="10" viewBox="0 0 16 10"><path d="M1.5 8.7 L8 2 L14.5 8.7" fill="none" stroke="#111" stroke-width="2.2"/></svg>
<div class="t" style="left:358.3px;top:312.2px;color:#262626">QR</div>
<div class="t" style="left:606px;top:312.2px;color:#262626">Rechnung</div>
<div class="t" style="left:1042px;top:312.2px;color:#262626">Std</div>
<div class="t" style="left:1102px;top:312.2px;color:#262626">Post</div>
<div class="t" style="left:1256px;top:312.2px;color:#262626">K-000001</div>
<div class="t" style="left:1488px;top:312.2px;color:#262626">KorrespondenzQR</div>
<div class="t" style="left:1752px;top:312.2px;color:#262626">aktiv</div>
<div class="t" style="left:1860px;top:312.2px;color:#262626">Batchjob</div>
<div class="abs" style="left:320px;top:552.5px;width:1722px;height:438px;background:#fff;border:2px solid #c8c8c8"></div>
<div class="t" style="left:334px;top:558px;color:#222">Korrespondenz:</div>
<div class="t b" style="left:494.5px;top:558px;color:#222">QR</div>
<div class="t b" style="left:720px;top:558px;color:#222">Rechnung</div>
<div class="t" style="left:334px;top:586px;color:#222">Typ:</div>
<div class="t b" style="left:494.5px;top:586px;color:#222">Std</div>
<div class="t b" style="left:720px;top:586px;color:#222">Standard</div>
<div class="t" style="left:1794px;top:558px;color:#222">Status:</div>
<div class="t b" style="left:1876px;top:558px;color:#222">aktiv</div>
<div class="t" style="left:1794px;top:586px;color:#222">Kanal:</div>
<div class="t b" style="left:1876px;top:586px;color:#222">Post</div>
<div class="t dv" style="left:358px;top:612.7px;font-size:21px;line-height:26px;height:26px;color:#222">Output</div>
<div class="gb" style="left:336px;top:639px;width:1690px;height:131.3px;"></div>
<div class="t" style="left:358px;top:654px;color:#222">Dokumentencode:</div>
<div class="t b" style="left:540px;top:654px;color:#222">K-000001</div>
<div class="t" style="left:358px;top:682px;color:#222">Dokumentensatz:</div>
<div class="t b" style="left:540px;top:682px;color:#222">KorrespondenzQR</div>
<div class="t" style="left:358px;top:710px;color:#222">Aufbereitung:</div>
<div class="t b" style="left:540px;top:710px;color:#222">Batchjob</div>
<div class="t" style="left:358px;top:738px;color:#222">Anredeset:</div>
<div class="t dv" style="left:358px;top:780.7px;font-size:21px;line-height:26px;height:26px;color:#222">Optionen</div>
<div class="gb" style="left:336px;top:807.5px;width:1690px;height:159.5px;"></div>
<div class="t" style="left:358px;top:822px;color:#222">Text 1 Label :</div>
<div class="t" style="left:676px;top:822px;color:#222">Vorschlagswert:</div>
<div class="t" style="left:1490px;top:822px;color:#222">editierbar?</div>
<div class="t b" style="left:1604px;top:822px;color:#222">nein</div>
<div class="t" style="left:358px;top:850px;color:#222">Text 2 Label :</div>
<div class="t" style="left:676px;top:850px;color:#222">Vorschlagswert:</div>
<div class="t" style="left:1490px;top:850px;color:#222">editierbar?</div>
<div class="t b" style="left:1604px;top:850px;color:#222">nein</div>
<div class="t" style="left:358px;top:878px;color:#222">Zahl 1 Label :</div>
<div class="t" style="left:676px;top:878px;color:#222">Vorschlagswert:</div>
<div class="t" style="left:1490px;top:878px;color:#222">editierbar?</div>
<div class="t b" style="left:1604px;top:878px;color:#222">nein</div>
<div class="t" style="left:358px;top:906px;color:#222">Zahl 2 Label :</div>
<div class="t" style="left:676px;top:906px;color:#222">Vorschlagswert:</div>
<div class="t" style="left:1490px;top:906px;color:#222">editierbar?</div>
<div class="t b" style="left:1604px;top:906px;color:#222">nein</div>
<div class="t" style="left:358px;top:934px;color:#222">Datum Label:</div>
<div class="t" style="left:676px;top:934px;color:#222">Vorschlagswert:</div>
<div class="t" style="left:1490px;top:934px;color:#222">editierbar?</div>
<div class="t b" style="left:1604px;top:934px;color:#222">nein</div>
<div class="abs" style="left:314px;top:1005.5px;width:1734px;height:480px;background:#f5f5f5;border:1.7px solid #a6a6a6;border-radius:7px 4px 0 0"></div>
<div class="abs" style="left:314.5px;top:1051px;width:6px;height:434px;background:#a9a9a9"></div>
<div class="abs" style="left:2041.5px;top:1051px;width:6px;height:434px;background:#a9a9a9"></div>
<div class="abs" style="left:314.5px;top:1479px;width:1733px;height:6px;background:#a9a9a9"></div>
<div class="abs" style="left:314.5px;top:1051px;width:1733px;height:5.5px;background:#a9a9a9"></div>
<div class="abs" style="left:316px;top:1007.2px;width:333.5px;height:44.5px;background:linear-gradient(#f7f7f7 0%,#ededed 35%,#cfcfcf 75%,#b0b0b0 100%);border-radius:6px 4px 0 0;border-right:1.7px solid #a0a0a0"></div>
<div class="t dv" style="left:323px;top:1018.5px;font-size:21px;line-height:26px;height:26px;letter-spacing:.09px">Korrespondenz-Ereignisse</div>
<svg class="abs" style="left:616px;top:1021.5px" width="19" height="19" viewBox="0 0 19 19"><path d="M1.5 1.5 L17.5 17.5 M17.5 1.5 L1.5 17.5" stroke="#111" stroke-width="1.7" fill="none"/></svg>
<div class="t dv" style="left:658.4px;top:1018.2px;font-size:21px;line-height:26px;height:26px;color:#35504f;letter-spacing:-.2px">Dokument Definitionen</div>
<div class="abs" style="left:905.5px;top:1007.5px;width:1.7px;height:44px;background:#a6a6a6"></div>
<div class="t dv" style="left:917px;top:1018.2px;font-size:21px;line-height:26px;height:26px;color:#35504f">Test Document Output</div>
<div class="abs" style="left:1160px;top:1007.5px;width:1.7px;height:44px;background:#a6a6a6"></div>
<svg class="abs" style="left:1873px;top:1013px" width="25" height="31" viewBox="0 0 25 31"><g fill="#2b5fd9"><path d="M3 13.5 Q3.5 6.5 11 6 L15 6 V2 L23 8 L15 14 V10.5 L11 10.5 Q6.5 10.5 3 13.5 Z"/><path d="M22 17.5 Q21.5 24.5 14 25 L10 25 V29 L2 23 L10 17 V20.5 L14 20.5 Q18.5 20.5 22 17.5 Z"/></g></svg>
<svg class="abs" style="left:1925.4px;top:1015px" width="10" height="29" viewBox="0 0 10 29"><g fill="#fff" stroke="#222" stroke-width="1.4"><circle cx="5" cy="5" r="3.6"/><circle cx="5" cy="14.3" r="3.6"/><circle cx="5" cy="23.6" r="3.6"/></g></svg>
<svg class="abs" style="left:1963.5px;top:1016.8px" width="21" height="8" viewBox="0 0 21 8"><rect x="1" y="1" width="19" height="6" fill="#fff" stroke="#333" stroke-width="1.6"/></svg>
<svg class="abs" style="left:2007px;top:1016.8px" width="22" height="20.5" viewBox="0 0 22 20.5"><rect x="1" y="1" width="20" height="18.5" fill="#fff" stroke="#333" stroke-width="1.6"/><path d="M1 4.3 H21" stroke="#333" stroke-width="1.6"/></svg>
<div class="t" style="left:324px;top:1060.5px;color:#1c1c1c">(1)</div>
<div class="abs" style="left:320.5px;top:1085px;width:1719.5px;height:394px;background:#ebebeb;border-top:2px solid #c6c6c6"></div>
<div class="abs" style="left:320.5px;top:1131.5px;width:1719.5px;height:2.5px;background:#c9c9c9"></div>
<div class="abs" style="left:322px;top:1135.5px;width:1716.5px;height:25.5px;background:#1e62d8"></div>
<div class="abs" style="left:364.5px;top:1093.5px;width:1.6px;height:33px;background:#d2d2d2"></div>
<div class="abs" style="left:364.5px;top:1134px;width:1.6px;height:345px;background:#c4c4c4"></div>
<div class="abs" style="left:364.5px;top:1135.5px;width:1.6px;height:25.5px;background:#dfe8f6"></div>
<div class="abs" style="left:832px;top:1093.5px;width:1.6px;height:33px;background:#d2d2d2"></div>
<div class="abs" style="left:832px;top:1134px;width:1.6px;height:345px;background:#c4c4c4"></div>
<div class="abs" style="left:832px;top:1135.5px;width:1.6px;height:25.5px;background:#dfe8f6"></div>
<div class="abs" style="left:1172.5px;top:1093.5px;width:1.6px;height:33px;background:#d2d2d2"></div>
<div class="abs" style="left:1172.5px;top:1134px;width:1.6px;height:345px;background:#c4c4c4"></div>
<div class="abs" style="left:1172.5px;top:1135.5px;width:1.6px;height:25.5px;background:#dfe8f6"></div>
<div class="abs" style="left:1332.8px;top:1093.5px;width:1.6px;height:33px;background:#d2d2d2"></div>
<div class="abs" style="left:1332.8px;top:1134px;width:1.6px;height:345px;background:#c4c4c4"></div>
<div class="abs" style="left:1332.8px;top:1135.5px;width:1.6px;height:25.5px;background:#dfe8f6"></div>
<div class="abs" style="left:1468.5px;top:1093.5px;width:1.6px;height:33px;background:#d2d2d2"></div>
<div class="abs" style="left:1468.5px;top:1134px;width:1.6px;height:345px;background:#c4c4c4"></div>
<div class="abs" style="left:1468.5px;top:1135.5px;width:1.6px;height:25.5px;background:#dfe8f6"></div>
<div class="abs" style="left:1596.5px;top:1093.5px;width:1.6px;height:33px;background:#d2d2d2"></div>
<div class="abs" style="left:1596.5px;top:1134px;width:1.6px;height:345px;background:#c4c4c4"></div>
<div class="abs" style="left:1596.5px;top:1135.5px;width:1.6px;height:25.5px;background:#dfe8f6"></div>
<div class="abs" style="left:1814.8px;top:1093.5px;width:1.6px;height:33px;background:#d2d2d2"></div>
<div class="abs" style="left:1814.8px;top:1134px;width:1.6px;height:345px;background:#c4c4c4"></div>
<div class="abs" style="left:1814.8px;top:1135.5px;width:1.6px;height:25.5px;background:#dfe8f6"></div>
<div class="abs" style="left:2038px;top:1093.5px;width:1.6px;height:33px;background:#d2d2d2"></div>
<div class="abs" style="left:2038px;top:1134px;width:1.6px;height:345px;background:#c4c4c4"></div>
<div class="abs" style="left:2038px;top:1135.5px;width:1.6px;height:25.5px;background:#dfe8f6"></div>
<div class="abs" style="left:326px;top:1095px;width:9.3px;height:30px;overflow:hidden"><div class="t" style="left:0;top:2.5px">Nr</div></div>
<div class="t" style="left:370px;top:1097.5px;">Ereignis</div>
<div class="t" style="left:838px;top:1097.5px;">Ereignisposition</div>
<div class="t" style="left:1178px;top:1097.5px;">vorgewählt</div>
<div class="t" style="left:1338px;top:1097.5px;">änderbar</div>
<div class="t" style="left:1602px;top:1097.5px;">Betrag änderbar</div>
<div class="t" style="left:1820px;top:1097.5px;">Betrag zwingend</div>
<div class="t" style="left:1192px;width:400px;text-align:right;top:1097.5px;">Betrag</div>
<div class="t" style="left:-42.5px;width:400px;text-align:right;top:1138px;color:#fff">1</div>
<div class="t" style="left:370px;top:1138px;color:#fff">2024.Spende.Spende</div>
<div class="t" style="left:838px;top:1138px;color:#fff">00</div>
<div class="t" style="left:1178px;top:1138px;color:#fff">ja</div>
<div class="t" style="left:1338px;top:1138px;color:#fff">ja</div>
<div class="t" style="left:1602px;top:1138px;color:#fff">ja</div>
<div class="t" style="left:1820px;top:1138px;color:#fff">ja</div>
<div class="t" style="left:6px;top:1492px;font-size:22.5px;line-height:30px;height:30px;letter-spacing:.34px;color:#111">Erfasst: 12.05.23 / kli Geändert: 21.12.23 / mop</div>
<div class="grip" style="left:1415.5px;top:1499px"></div>
<div class="t" style="left:1430.4px;top:1497.6px;">Standard / mop</div>
<div class="grip" style="left:1996px;top:1497px"></div>
<svg class="abs" style="left:2011.5px;top:1497px" width="28" height="28" viewBox="0 0 28 28"><circle cx="14" cy="14" r="11.8" fill="none" stroke="#1a1a1a" stroke-width="2.6"/><rect x="12.5" y="12" width="3" height="8.5" fill="#1a1a1a"/><rect x="12.5" y="7" width="3" height="3" fill="#1a1a1a"/></svg>
</div>
</body>
</html>
